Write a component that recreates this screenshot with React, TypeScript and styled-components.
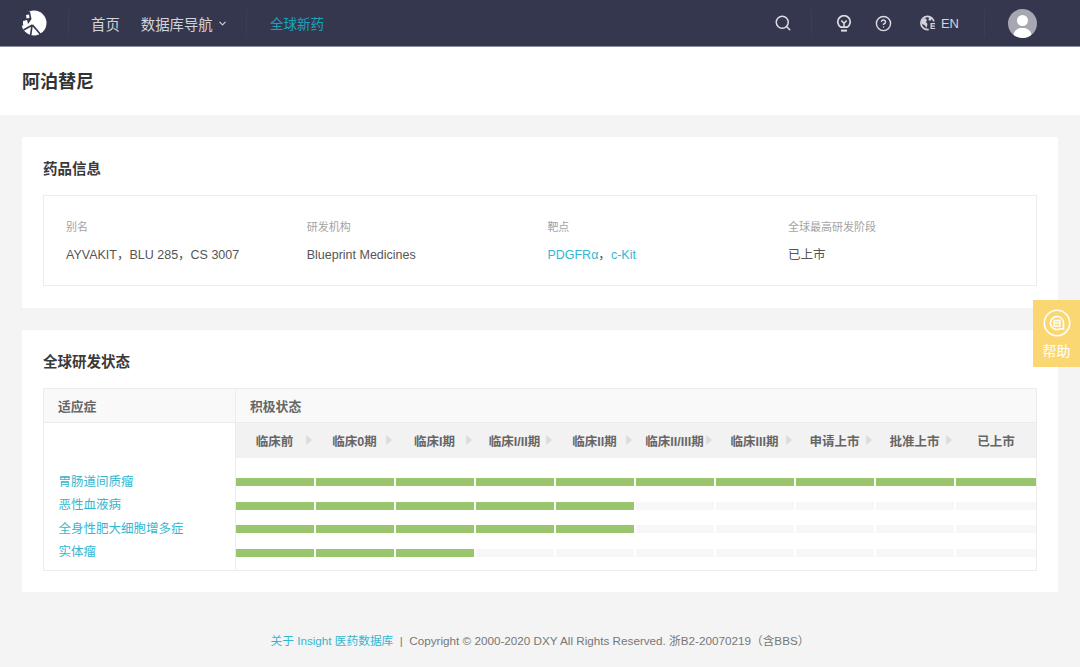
import React from 'react';
import styled, { createGlobalStyle } from 'styled-components';
import { ChevronDown, Search, CircleHelp } from 'lucide-react';

const FONT = '"Liberation Sans", "Noto Sans CJK SC", sans-serif';
const ACCENT = '#35b6d0';

const GlobalStyle = createGlobalStyle`
  html, body {
    margin: 0;
    padding: 0;
    background: #f4f4f4;
    font-family: ${FONT};
  }
  * {
    box-sizing: border-box;
  }
`;

const Page = styled.div`
  width: 1080px;
  height: 667px;
  overflow: hidden;
  position: relative;
  background: #f4f4f4;
`;

const TopBar = styled.header`
  height: 47px;
  background: #35374e;
  border-bottom: 1px solid #8d8e9d;
  display: flex;
  align-items: center;
  padding-left: 21px;
`;

const LogoSlot = styled.div`
  width: 48px;
  height: 28px;
  display: flex;
  align-items: center;
  border-right: 1px solid #3b3d55;
`;

const NavItem = styled.a<{ $active?: boolean }>`
  font-size: ${(p) => (p.$active ? '13.5px' : '14.4px')};
  color: ${(p) => (p.$active ? '#1ba3bb' : '#d3d4da')};
  display: flex;
  align-items: center;
  gap: 4px;
`;

const NavGroup = styled.nav`
  width: 178px;
  height: 28px;
  display: flex;
  align-items: center;
  gap: 21px;
  padding-left: 22px;
  margin-right: 23px;
  border-right: 1px solid #3b3d55;
`;

const Spacer = styled.div`
  flex: 1;
`;

const ToolGroup = styled.div<{ $pad: string; $gap?: number; $line?: boolean }>`
  height: 28px;
  display: flex;
  align-items: center;
  gap: ${(p) => p.$gap ?? 0}px;
  padding: ${(p) => p.$pad};
  color: #dcdde2;
  border-right: ${(p) => (p.$line ? '1px solid #3b3d55' : 'none')};
`;

const LangSwitch = styled.div`
  display: flex;
  align-items: center;
  gap: 4px;
  margin-left: 4px;
  font-size: 13px;
  color: #d3d4da;
`;

const Avatar = styled.div`
  width: 29px;
  height: 29px;
  border-radius: 50%;
  overflow: hidden;
  background: #a6a7b1;
`;

const TitleBand = styled.div`
  height: 68px;
  background: #fff;
  display: flex;
  align-items: center;
  padding: 0 22px 3px;
`;

const DrugName = styled.h1`
  margin: 0;
  font-size: 18px;
  font-weight: 700;
  color: #333;
`;

const Main = styled.main`
  padding: 22px 22px 0;
  display: flex;
  flex-direction: column;
  gap: 22px;
`;

const Card = styled.section<{ $height: number }>`
  height: ${(p) => p.$height}px;
  background: #fff;
  padding: 21px;
`;

const CardTitle = styled.h2`
  margin: 0 0 15px;
  height: 22px;
  line-height: 22px;
  font-size: 14.5px;
  font-weight: 700;
  color: #3a3a3a;
`;

const InfoBox = styled.div`
  height: 91px;
  border: 1px solid #ececec;
  padding: 22px;
  display: grid;
  grid-template-columns: repeat(4, 240.7px);
`;

const InfoLabel = styled.div`
  font-size: 11px;
  line-height: 18px;
  color: #a3a3a3;
  margin-bottom: 10px;
`;

const InfoValue = styled.div`
  font-size: 12.5px;
  line-height: 18px;
  color: #555;
`;

const LinkText = styled.a`
  color: ${ACCENT};
`;

const Table = styled.div`
  height: 183px;
  width: 994px;
  border: 1px solid #ececec;
  display: grid;
  grid-template-columns: 192px 800px;
  grid-template-rows: 34px 147px;
`;

const HeadCell = styled.div<{ $divider?: boolean }>`
  background: #f9f9f9;
  border-bottom: 1px solid #ececec;
  border-right: ${(p) => (p.$divider ? '1px solid #ececec' : 'none')};
  display: flex;
  align-items: center;
  padding: 0 0 1px 14px;
  font-size: 12.8px;
  font-weight: 700;
  color: #666;
`;

const IndicationCol = styled.div`
  border-right: 1px solid #ececec;
  padding: 47.75px 0 0 14.5px;
`;

const Indication = styled.a`
  display: block;
  height: 23.5px;
  line-height: 23.5px;
  font-size: 12.5px;
  color: ${ACCENT};
`;

const Stages = styled.div`
  height: 35px;
  background: #f2f2f2;
  display: grid;
  grid-template-columns: repeat(10, 80px);
  margin-bottom: 12.25px;
`;

const Stage = styled.div`
  position: relative;
  display: flex;
  align-items: center;
  justify-content: center;
  padding-right: 3px;
  font-size: 12.5px;
  font-weight: 700;
  color: #666;
  white-space: nowrap;
  &:last-child {
    padding-right: 0;
  }
`;

const StageArrow = styled.span`
  position: absolute;
  right: 4px;
  top: 12px;
  width: 0;
  height: 0;
  border-left: 6px solid #dcdcdc;
  border-top: 5px solid transparent;
  border-bottom: 5px solid transparent;
`;

const BarRow = styled.div`
  height: 23.5px;
  display: grid;
  grid-template-columns: repeat(10, 80px);
  align-items: center;
`;

const Segment = styled.div<{ $done: boolean }>`
  height: 8px;
  margin-right: 2px;
  background: ${(p) => (p.$done ? '#98c56e' : '#f7f7f7')};
  &:last-child {
    margin-right: 0;
  }
`;

const Footer = styled.footer`
  margin-top: 40px;
  text-align: center;
  font-size: 11.7px;
  line-height: 18px;
  color: #777;
`;

const HelpTab = styled.aside`
  position: absolute;
  left: 1033px;
  top: 300px;
  width: 47px;
  height: 67px;
  background: #fbd774;
  display: flex;
  flex-direction: column;
  align-items: center;
  padding-top: 9px;
  gap: 4px;
  color: #fff;
  font-size: 14px;
  line-height: 20px;
`;

const stages = ['临床前', '临床0期', '临床I期', '临床I/II期', '临床II期', '临床II/III期', '临床III期', '申请上市', '批准上市', '已上市'];
const rows = [
  { name: '胃肠道间质瘤', done: 10 },
  { name: '恶性血液病', done: 5 },
  { name: '全身性肥大细胞增多症', done: 5 },
  { name: '实体瘤', done: 3 },
];

const Logo = () => (
  <svg width="26" height="26" viewBox="0 0 26 26">
    <circle cx="13" cy="13" r="12.5" fill="#fff" />
    <path d="M0 3l9-1.500 1.500 7.500-3 4.500L0 16z" fill="#35374e" />
    <path d="M5 5l3-.500.500 3.500-3 .500zM2 11l4-1 1 3.500-3 2.500-2-1.500z" fill="#fff" />
    <path d="M11.500 15L2.500 20M11 15.500L9.500 26M11.500 15L20 25" stroke="#35374e" strokeWidth="1.700" fill="none" />
  </svg>
);

const BulbIcon = () => (
  <svg width="16" height="17" viewBox="0 0 16 17" fill="none" stroke="currentColor" strokeWidth="1.700">
    <path d="M4.800 12.200A6.200 6.200 0 1 1 11.200 12.200z" />
    <path d="M5.300 5.500L8 8.300l2.700-2.800M8 8.300v3.700" strokeWidth="1.500" />
    <path d="M5 15.600h6" strokeWidth="2" />
  </svg>
);

const GlobeIcon = () => (
  <svg width="17" height="16" viewBox="0 0 17 16">
    <circle cx="7.500" cy="8" r="6.600" fill="none" stroke="currentColor" strokeWidth="1.700" />
    <path d="M2 5l3-2 2 2-1 2 1.500 2-1 4-2-3-3-1zM9 2l3 1-1 2.500H8.500z" fill="currentColor" />
    <rect x="8.500" y="6.500" width="8" height="9" rx="1.500" fill="#35374e" />
    <path d="M10.500 8h4.500v1.300h-3.200v1.200h3v1.200h-3v1.200h3.300V14h-4.600z" fill="currentColor" />
  </svg>
);

const AvatarIcon = () => (
  <svg width="29" height="29" viewBox="0 0 29 29">
    <circle cx="14.500" cy="11.500" r="5.500" fill="#fff" />
    <path d="M5 29c0-7 4-9 7-10h5c3 1 7 3 7 10z" fill="#fff" />
  </svg>
);

const HelpIcon = () => (
  <svg width="28" height="28" viewBox="0 0 28 28" fill="none" stroke="#fff">
    <circle cx="14" cy="14" r="12.700" strokeWidth="1.600" />
    <path d="M20.500 14a6.500 6.500 0 1 0-3 5.500l3 .5z" strokeWidth="1.600" />
    <path d="M11 11.500h6v5.500h-6zM11 14h6" strokeWidth="1.300" />
  </svg>
);

export default function App() {
  return (
    <Page>
      <GlobalStyle />
      <TopBar>
        <LogoSlot>
          <Logo />
        </LogoSlot>
        <NavGroup>
          <NavItem>首页</NavItem>
          <NavItem>
            数据库导航
            <ChevronDown size={11} strokeWidth={2.4} />
          </NavItem>
        </NavGroup>
        <NavItem $active>全球新药</NavItem>
        <Spacer />
        <ToolGroup $pad="0 19px 0 0" $line>
          <Search size={18} strokeWidth={2} />
        </ToolGroup>
        <ToolGroup $pad="0 25px 0 24px" $gap={23.5} $line>
          <BulbIcon />
          <CircleHelp size={17} strokeWidth={2} />
          <LangSwitch>
            <GlobeIcon />
            EN
          </LangSwitch>
        </ToolGroup>
        <ToolGroup $pad="0 43px 0 23px">
          <Avatar>
            <AvatarIcon />
          </Avatar>
        </ToolGroup>
      </TopBar>

      <TitleBand>
        <DrugName>阿泊替尼</DrugName>
      </TitleBand>

      <Main>
        <Card $height={171}>
          <CardTitle>药品信息</CardTitle>
          <InfoBox>
            <div>
              <InfoLabel>别名</InfoLabel>
              <InfoValue>AYVAKIT，BLU 285，CS 3007</InfoValue>
            </div>
            <div>
              <InfoLabel>研发机构</InfoLabel>
              <InfoValue>Blueprint Medicines</InfoValue>
            </div>
            <div>
              <InfoLabel>靶点</InfoLabel>
              <InfoValue>
                <LinkText>PDGFRα</LinkText>，<LinkText>c-Kit</LinkText>
              </InfoValue>
            </div>
            <div>
              <InfoLabel>全球最高研发阶段</InfoLabel>
              <InfoValue>已上市</InfoValue>
            </div>
          </InfoBox>
        </Card>

        <Card $height={262}>
          <CardTitle>全球研发状态</CardTitle>
          <Table>
            <HeadCell $divider>适应症</HeadCell>
            <HeadCell>积极状态</HeadCell>
            <IndicationCol>
              {rows.map((r) => (
                <Indication key={r.name}>{r.name}</Indication>
              ))}
            </IndicationCol>
            <div>
              <Stages>
                {stages.map((s, i) => (
                  <Stage key={s}>
                    {s}
                    {i < stages.length - 1 && <StageArrow />}
                  </Stage>
                ))}
              </Stages>
              {rows.map((r) => (
                <BarRow key={r.name}>
                  {stages.map((s, i) => (
                    <Segment key={s} $done={i < r.done} />
                  ))}
                </BarRow>
              ))}
            </div>
          </Table>
        </Card>
      </Main>

      <Footer>
        <LinkText>关于 Insight 医药数据库</LinkText>&nbsp; |&nbsp; Copyright © 2000-2020 DXY All Rights Reserved. 浙B2-20070219（含BBS）
      </Footer>

      <HelpTab>
        <HelpIcon />
        帮助
      </HelpTab>
    </Page>
  );
}
